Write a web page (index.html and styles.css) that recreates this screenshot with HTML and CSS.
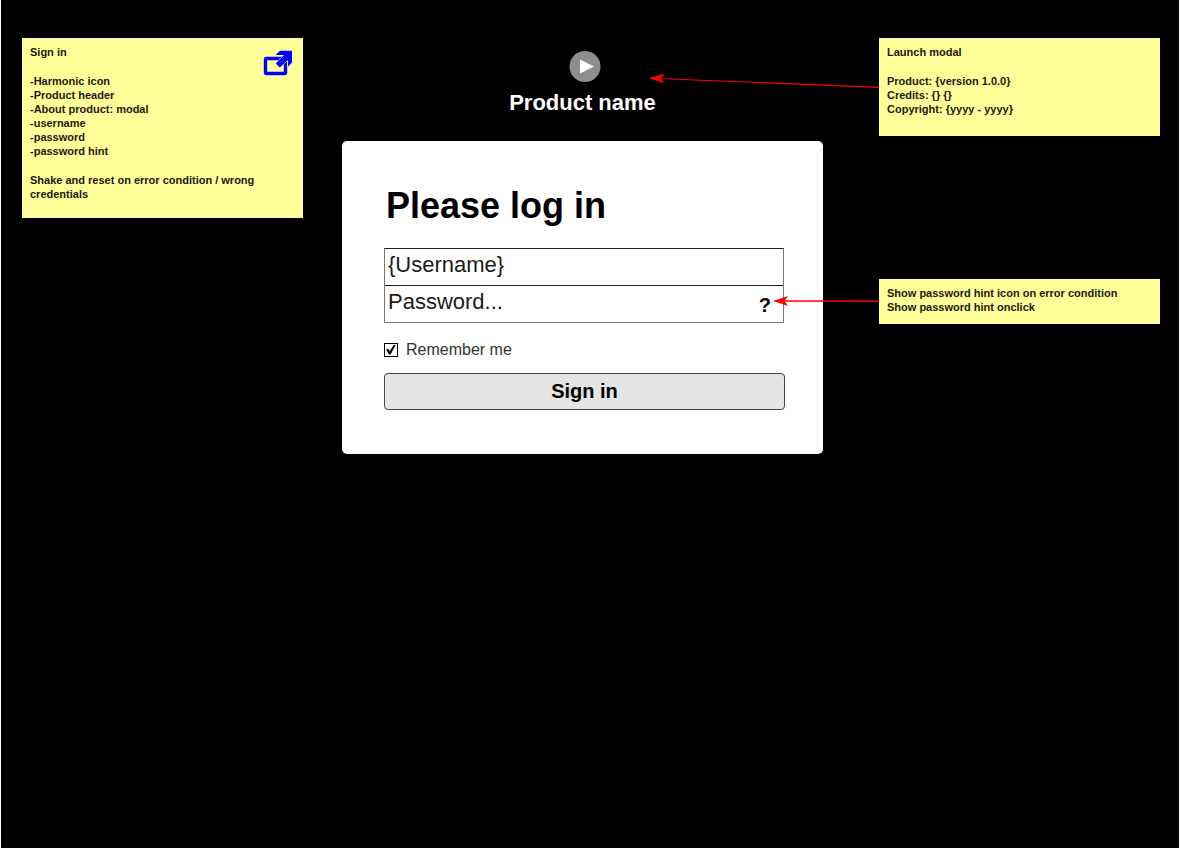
FILE: index.html
```html
<!DOCTYPE html>
<html lang="en">
<head>
<meta charset="utf-8">
<meta name="viewport" content="width=device-width, initial-scale=1">
<title>Sign in</title>
<link rel="stylesheet" href="styles.css">
</head>
<body>
<div class="stage">
  <aside class="note note-signin">
    <div class="note-text">
      <p>Sign in</p>
      <ul class="note-list">
        <li>-Harmonic icon</li>
        <li>-Product header</li>
        <li>-About product: modal</li>
        <li>-username</li>
        <li>-password</li>
        <li>-password hint</li>
      </ul>
      <p>Shake and reset on error condition / wrong credentials</p>
    </div>
    <a class="note-link" href="#" aria-label="Open sign in">
      <svg width="30" height="26" viewBox="0 0 30 26" aria-hidden="true">
        <rect x="2.500" y="8.500" width="20" height="15" rx="1" fill="none" stroke="#0000ff" stroke-width="3.400"/>
        <path d="M12.500 5 L17 0.800 H29 V12.500 L25 16.700 V10 L16.800 17.500 L12.700 13.500 L21 5 Z" fill="#0000ff" stroke="#ffff99" stroke-width="1" paint-order="stroke"/>
      </svg>
    </a>
  </aside>

  <main class="login">
    <header class="product">
      <svg width="32" height="32" viewBox="0 0 32 32" aria-hidden="true">
        <circle cx="16" cy="16.500" r="15.500" fill="#8e8e8e"/>
        <path d="M11 9.500 L25 16.500 L11 23.500 Z" fill="#fff"/>
      </svg>
      <div class="product-name">Product name</div>
    </header>
    <form class="card">
      <h1 class="card-title">Please log in</h1>
      <div class="fields">
        <input class="field" type="text" aria-label="Username" value="{Username}">
        <div class="password-row">
          <input class="field" type="password" aria-label="Password" placeholder="Password...">
          <button class="hint" type="button" aria-label="Show password hint">?</button>
        </div>
      </div>
      <label class="remember"><input class="tick" type="checkbox" checked>Remember me</label>
      <button class="submit" type="submit">Sign in</button>
    </form>
  </main>

  <div class="notes">
    <aside class="note note-modal">
      <div class="note-text">
        <p>Launch modal</p>
        <p>Product: {version 1.0.0}<br>Credits: {} {}<br>Copyright: {yyyy - yyyy}</p>
      </div>
      <svg class="arrow arrow-modal" width="230" height="20" viewBox="0 0 230 20" aria-hidden="true">
        <path d="M8 5.500 L230 14.300" stroke="#ff0000" stroke-width="1.200"/>
        <path d="M0 5 L16 0.600 L11.500 5.500 L15.600 10.400 Z" fill="#ff0000"/>
      </svg>
    </aside>
    <aside class="note note-hint">
      <p>Show password hint icon on error condition<br>Show password hint onclick</p>
      <svg class="arrow arrow-hint" width="106" height="12" viewBox="0 0 106 12" aria-hidden="true">
        <path d="M8 6 L106 6.300" stroke="#ff0000" stroke-width="1.400"/>
        <path d="M0 6 L15 1 L11.500 6 L15 11 Z" fill="#ff0000"/>
      </svg>
    </aside>
  </div>
</div>
</body>
</html>
```
FILE: styles.css
```css
* {
  box-sizing: border-box;
}

body {
  margin: 0;
  background: #fff;
  font-family: "Liberation Sans", Arial, sans-serif;
  color: #000;
}

h1, p, ul {
  margin: 0;
  padding: 0;
}

.stage {
  display: grid;
  grid-template-columns: 281fr 39px 481fr 56px 281fr;
  align-items: start;
  min-height: calc(100vh - 3px);
  margin: 0 3px 3px 1px;
  padding: 38px 19px 38px 21px;
  background: #000;
}

.note {
  position: relative;
  padding: 7px 8px 16px;
  background: #ffff99;
  color: #1a1a10;
  font-size: 11px;
  font-weight: bold;
  line-height: 14px;
}

.note-text {
  display: flex;
  flex-direction: column;
  gap: 15px;
}

.note-signin {
  grid-column: 1;
  padding-bottom: 17px;
}

.note-list {
  list-style: none;
}

.note-link {
  position: absolute;
  top: 12px;
  right: 10px;
}

.note-link svg,
.product svg {
  display: block;
}

.login {
  grid-column: 3;
}

.product {
  display: flex;
  flex-direction: column;
  align-items: center;
  gap: 8px;
  padding: 12px 0 25px;
}

.product svg {
  margin-left: 4px;
}

.product-name {
  color: #fff;
  font-size: 22px;
  font-weight: bold;
  line-height: 26px;
}

.card {
  display: flex;
  flex-direction: column;
  padding: 44px 38px 44px 42px;
  border-radius: 5px;
  background: #fff;
}

.card-title {
  margin: 0 0 21px 2px;
  font-size: 36px;
  line-height: 42px;
}

.fields {
  margin-right: 1px;
  border: 1px solid #777;
  border-top-color: #222;
}

.field {
  display: block;
  width: 100%;
  height: 36px;
  margin: 0;
  padding: 0 3px 4px;
  border: 0;
  outline: 0;
  background: transparent;
  color: #1a1a1a;
  font: 22px "Liberation Sans", Arial, sans-serif;
}

.field::placeholder {
  color: #1a1a1a;
  opacity: 1;
}

.password-row {
  display: flex;
  align-items: center;
  border-top: 1px solid #222;
}

.hint {
  padding: 2px 12px 0 8px;
  border: 0;
  background: transparent;
  color: #000;
  font: bold 20px "Liberation Sans", Arial, sans-serif;
}

.remember {
  display: flex;
  align-items: center;
  gap: 8px;
  margin: 16px 0 13px;
  color: #333;
  font-size: 16px;
  line-height: 21px;
}

.tick {
  display: grid;
  place-items: center;
  width: 14px;
  height: 14px;
  margin: 0;
  border: 1px solid #000;
  appearance: none;
  background: #fff;
}

.tick:checked::before {
  content: "";
  width: 10px;
  height: 10px;
  background: #000;
  clip-path: polygon(0 50%, 22% 42%, 38% 65%, 80% 0, 100% 0, 45% 100%, 30% 100%);
}

.submit {
  height: 37px;
  padding: 0;
  border: 1px solid #444;
  border-radius: 4px;
  background: #e4e4e4;
  color: #000;
  font: bold 20px "Liberation Sans", Arial, sans-serif;
}

.notes {
  display: flex;
  grid-column: 5;
  flex-direction: column;
  gap: 143px;
}

.note-modal {
  padding-bottom: 20px;
}

.note-hint {
  padding-bottom: 10px;
}

.arrow {
  position: absolute;
  right: 100%;
}

.arrow-modal {
  top: 35px;
}

.arrow-hint {
  top: 16px;
}
```
